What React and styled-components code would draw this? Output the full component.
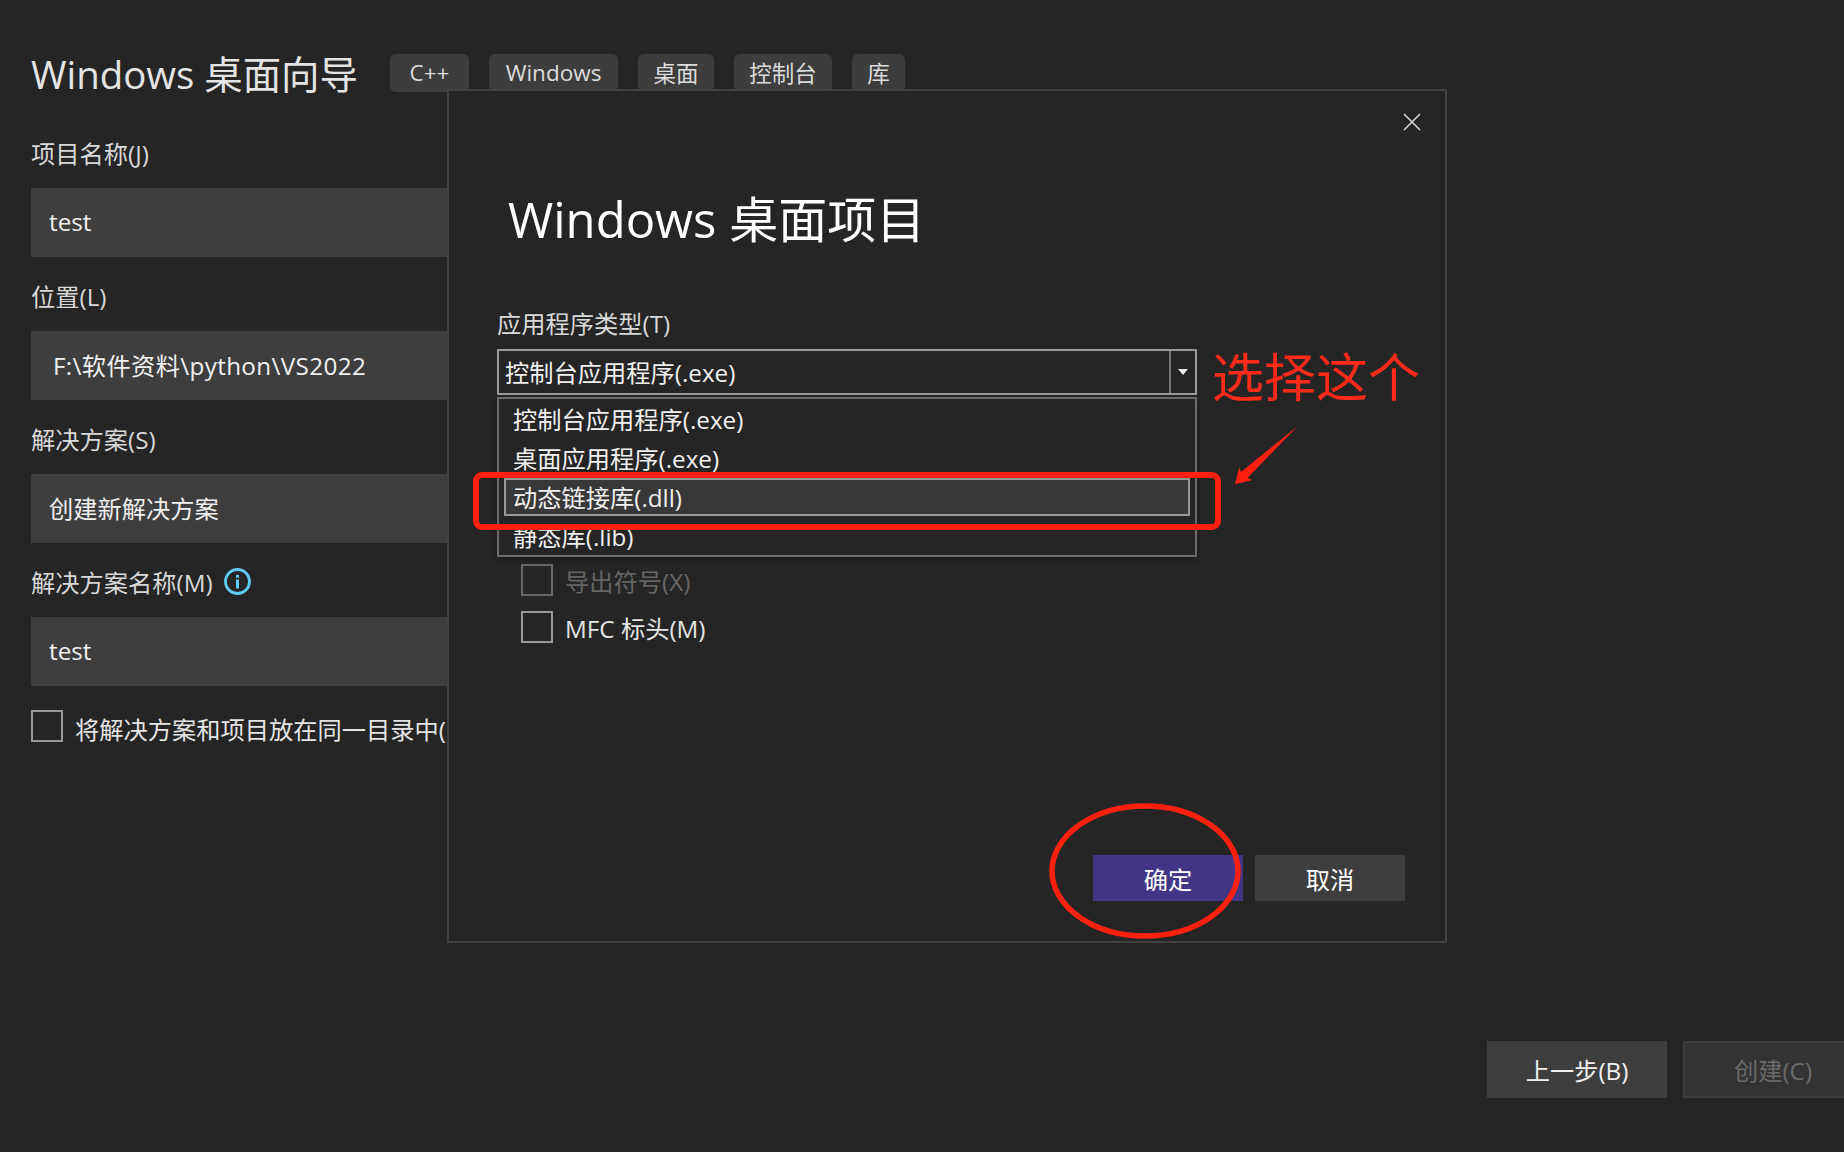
import React from "react";
import styled, { createGlobalStyle } from "styled-components";

const FONT = `"Open Sans", "Noto Sans CJK SC", sans-serif`;

const Global = createGlobalStyle`
  html, body { margin: 0; padding: 0; background: #252525; }
  * { box-sizing: border-box; }
`;

const Page = styled.div`
  position: relative;
  width: 1844px;
  height: 1152px;
  overflow: hidden;
  background: #252525;
  font-family: ${FONT};
  color: #dcdcdc;
  display: flex;
  flex-direction: column;
  padding: 54px 0 54px 31px;
`;

const Header = styled.div`
  display: flex;
  align-items: center;
  height: 38px;
`;
const PageTitle = styled.h1`
  margin: 0 28px 0 0;
  width: 331px;
  padding-bottom: 3px;
  font-size: 38.4px;
  font-weight: 400;
  color: #e4e4e4;
  white-space: nowrap;
`;
const Tags = styled.div`
  display: flex;
  gap: 20px;
`;
const Tag = styled.span`
  display: flex;
  align-items: center;
  justify-content: center;
  width: ${(p) => p.$w}px;
  height: 38px;
  padding-bottom: 1px;
  border-radius: 6px;
  background: #3d3d3d;
  font-size: 22.5px;
  color: #dcdcdc;
`;

const Form = styled.div`
  display: flex;
  flex-direction: column;
  margin-top: 39px;
`;
const Label = styled.label`
  display: flex;
  align-items: center;
  gap: 11px;
  height: 43px;
  font-size: 24.25px;
  color: #d8d8d8;
  margin-bottom: 14px;
`;
const Field = styled.div`
  display: flex;
  align-items: center;
  width: 600px;
  height: 69px;
  padding: 0 0 2px ${(p) => p.$pad || 18}px;
  margin-bottom: 17px;
  background: #3e3e3e;
  font-size: 24.25px;
  letter-spacing: ${(p) => p.$spread || 0}px;
  color: #f0f0f0;
`;
const CheckRow = styled.label`
  display: flex;
  align-items: center;
  gap: ${(p) => p.$gap || 12}px;
  height: 32px;
  font-size: 24.25px;
  white-space: nowrap;
  color: ${(p) => (p.$off ? "#666" : "#e4e4e4")};
`;
const SameFolderRow = styled(CheckRow)`
  margin-top: 7px;
`;
const SameFolderText = styled.span`
  padding-top: 4px;
`;
const Box = styled.span`
  flex: none;
  width: 32px;
  height: 32px;
  border: 2px solid ${(p) => (p.$off ? "#666" : "#999")};
`;

const Footer = styled.div`
  display: flex;
  gap: 16px;
  margin-top: auto;
  padding-left: 1456px;
`;
const WizardButton = styled.button`
  flex: none;
  width: 180px;
  height: 57px;
  padding: 0;
  font: 24.25px ${FONT};
  background: ${(p) => (p.$off ? "#333" : "#3e3e3e")};
  color: ${(p) => (p.$off ? "#6a6a6a" : "#f0f0f0")};
  border: ${(p) => (p.$off ? "2px solid #3c3c3c" : "none")};
`;

const Dialog = styled.section`
  position: absolute;
  left: 447px;
  top: 89px;
  width: 1000px;
  height: 854px;
  background: #252525;
  border: 2px solid #414141;
  display: flex;
  flex-direction: column;
  padding: 0 40px 40px 48px;
`;
const CloseButton = styled.button`
  position: absolute;
  right: 21px;
  top: 19px;
  width: 24px;
  height: 24px;
  padding: 0;
  background: none;
  border: none;
  color: #dcdcdc;
  display: flex;
  align-items: center;
  justify-content: center;
`;
const DialogTitle = styled.h2`
  margin: 87px 0 0 11px;
  height: 82px;
  font-size: 49px;
  font-weight: 400;
  line-height: 82px;
  color: #fff;
  white-space: nowrap;
`;
const TypeLabel = styled.div`
  margin-top: 46px;
  height: 36px;
  line-height: 36px;
  font-size: 24.25px;
  color: #d8d8d8;
`;
const Combo = styled.div`
  display: flex;
  align-items: stretch;
  width: 700px;
  height: 46px;
  margin-top: 7px;
  border: 2px solid #999;
  font-size: 24.25px;
  color: #f0f0f0;
`;
const ComboValue = styled.span`
  flex: 1;
  padding-left: 6px;
  line-height: 44px;
`;
const ComboArrow = styled.span`
  display: flex;
  align-items: center;
  justify-content: center;
  width: 26px;
  border-left: 2px solid #777;
  color: #eee;
`;
const Caret = styled.i`
  display: block;
  border-left: 5px solid transparent;
  border-right: 5px solid transparent;
  border-top: 6px solid #eee;
`;
const Menu = styled.ul`
  list-style: none;
  margin: 2px 0 0;
  padding: 1px 5px;
  width: 700px;
  height: 160px;
  border: 2px solid #6a6a6a;
  font-size: 24.25px;
  color: #f0f0f0;
  box-shadow: 0 3px 6px rgba(0, 0, 0, 0.35);
`;
const MenuItem = styled.li`
  height: ${(p) => (p.$active ? 38 : 39)}px;
  margin-bottom: ${(p) => (p.$active ? 1 : 0)}px;
  line-height: 36px;
  padding-left: 7px;
  border: 2px solid ${(p) => (p.$active ? "#999" : "transparent")};
  background: ${(p) => (p.$active ? "#383838" : "transparent")};
`;
const Options = styled.div`
  display: flex;
  flex-direction: column;
  gap: 15px;
  margin: 7px 0 0 24px;
`;
const DialogActions = styled.div`
  display: flex;
  justify-content: flex-end;
  gap: 12px;
  margin-top: auto;
`;
const DialogButton = styled.button`
  width: 150px;
  height: 46px;
  padding: 0;
  border: none;
  font: 24.25px ${FONT};
  color: #fff;
  background: ${(p) => (p.$primary ? "#433585" : "#3e3e3e")};
`;

const Note = styled.div`
  position: absolute;
  left: 1212px;
  top: 342px;
  font-size: 52px;
  font-weight: 400;
  line-height: 70px;
  color: #ff2a1a;
  white-space: nowrap;
`;
const Marks = styled.svg`
  position: absolute;
  left: 0;
  top: 0;
  pointer-events: none;
`;

function Info() {
  return (
    <svg width="27" height="27" viewBox="0 0 27 27" fill="none">
      <circle cx="13.5" cy="13.5" r="12" stroke="#5fcdf5" strokeWidth="2.8" />
      <rect x="12" y="11.5" width="3" height="9" fill="#5fcdf5" />
      <rect x="12" y="6.8" width="3" height="3" fill="#5fcdf5" />
    </svg>
  );
}

export default function App() {
  return (
    <Page>
      <Global />
      <Header>
        <PageTitle>Windows 桌面向导</PageTitle>
        <Tags>
          <Tag $w={79}>C++</Tag>
          <Tag $w={129}>Windows</Tag>
          <Tag $w={76}>桌面</Tag>
          <Tag $w={98}>控制台</Tag>
          <Tag $w={53}>库</Tag>
        </Tags>
      </Header>
      <Form>
        <Label>项目名称(J)</Label>
        <Field>test</Field>
        <Label>位置(L)</Label>
        <Field $pad={22} $spread={0.35}>F:\软件资料\python\VS2022</Field>
        <Label>解决方案(S)</Label>
        <Field>创建新解决方案</Field>
        <Label>
          解决方案名称(M) <Info />
        </Label>
        <Field>test</Field>
        <SameFolderRow>
          <Box />
          <SameFolderText>将解决方案和项目放在同一目录中(D)</SameFolderText>
        </SameFolderRow>
      </Form>
      <Footer>
        <WizardButton>上一步(B)</WizardButton>
        <WizardButton $off>创建(C)</WizardButton>
      </Footer>

      <Dialog>
        <CloseButton aria-label="关闭">
          <svg width="18" height="18" viewBox="0 0 18 18" stroke="currentColor" strokeWidth="1.5">
            <path d="M1 1 17 17M17 1 1 17" />
          </svg>
        </CloseButton>
        <DialogTitle>Windows 桌面项目</DialogTitle>
        <TypeLabel>应用程序类型(T)</TypeLabel>
        <Combo>
          <ComboValue>控制台应用程序(.exe)</ComboValue>
          <ComboArrow>
            <Caret />
          </ComboArrow>
        </Combo>
        <Menu>
          <MenuItem>控制台应用程序(.exe)</MenuItem>
          <MenuItem>桌面应用程序(.exe)</MenuItem>
          <MenuItem $active>动态链接库(.dll)</MenuItem>
          <MenuItem>静态库(.lib)</MenuItem>
        </Menu>
        <Options>
          <CheckRow $off>
            <Box $off />
            导出符号(X)
          </CheckRow>
          <CheckRow>
            <Box />
            MFC 标头(M)
          </CheckRow>
        </Options>
        <DialogActions>
          <DialogButton $primary>确定</DialogButton>
          <DialogButton>取消</DialogButton>
        </DialogActions>
      </Dialog>

      <Note>选择这个</Note>
      <Marks width="1844" height="1152" viewBox="0 0 1844 1152" fill="none">
        <rect x="476" y="475" width="742" height="52" rx="6" stroke="#ff2010" strokeWidth="6" />
        <ellipse cx="1145" cy="871" rx="93" ry="65" stroke="#ff2010" strokeWidth="5.5" />
        <polygon points="1297.7,426 1241,472 1239.3,467.3 1235,484.3 1252.3,480 1247.5,478" fill="#ff2010" />
      </Marks>
    </Page>
  );
}
